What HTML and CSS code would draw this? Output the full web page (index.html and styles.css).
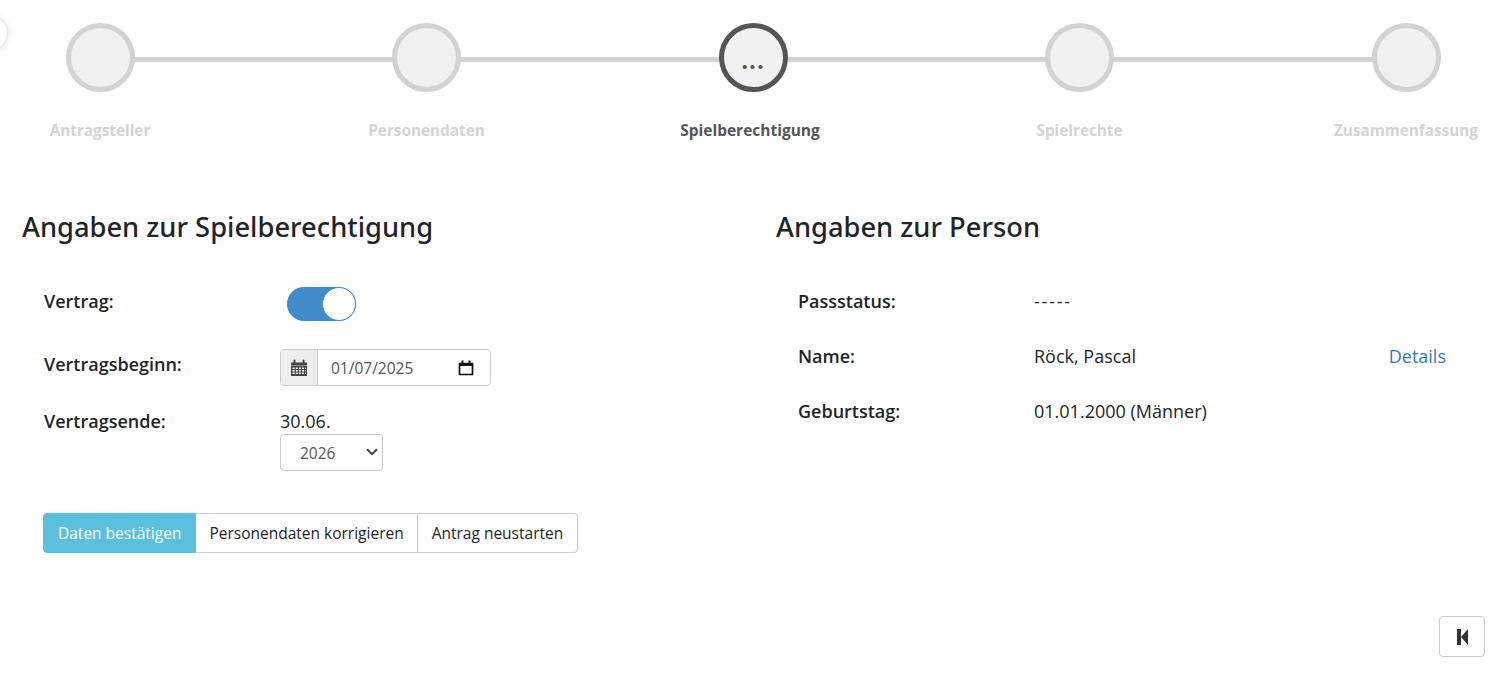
FILE: index.html
```html
<!DOCTYPE html>
<html lang="de">
<head>
<meta charset="utf-8">
<title>Spielberechtigung</title>
<link rel="stylesheet" href="styles.css">
</head>
<body>
<button class="side-toggle" aria-label="Menü"></button>
<ol class="stepper">
  <li class="step"><span class="dot"></span><span class="step-label">Antragsteller</span></li>
  <li class="step"><span class="dot"></span><span class="step-label">Personendaten</span></li>
  <li class="step active"><span class="dot">...</span><span class="step-label">Spielberechtigung</span></li>
  <li class="step"><span class="dot"></span><span class="step-label">Spielrechte</span></li>
  <li class="step"><span class="dot"></span><span class="step-label">Zusammenfassung</span></li>
</ol>
<main class="columns">
  <section class="col">
    <h2 class="title">Angaben zur Spielberechtigung</h2>
    <div class="form-row row-toggle">
      <label class="lbl">Vertrag:</label>
      <span class="switch"><span class="knob"></span></span>
    </div>
    <div class="form-row row-date">
      <label class="lbl">Vertragsbeginn:</label>
      <div class="date-group">
        <span class="addon">
          <svg width="16" height="17" viewBox="0 0 16 17"><path fill="#444" d="M0 3.500h2.500V1.500a1 1 0 0 1 2 0v2h7v-2a1 1 0 0 1 2 0v2H16v3H0z"/><path fill="#444" fill-rule="evenodd" d="M0 7h16v10H0zM1.500 8.500v1.500h2.200V8.500zM4.700 8.500v1.500h2.100V8.500zM7.800 8.500v1.500h2.100V8.500zM10.900 8.500v1.500h2.100V8.500zM14 8.500v1.500h.7V8.500zM1.500 11v1.500h2.200V11zM4.700 11v1.500h2.100V11zM7.800 11v1.500h2.100V11zM10.900 11v1.500h2.100V11zM14 11v1.500h.7V11zM1.500 13.500V15h2.200v-1.500zM4.700 13.500V15h2.100v-1.500zM7.800 13.500V15h2.100v-1.500zM10.900 13.500V15h2.100v-1.500zM14 13.500V15h.7v-1.500z"/></svg>
        </span>
        <span class="date-input">
          <span class="date-text">01/07/2025</span>
          <svg width="16" height="16" viewBox="0 0 16 16"><path fill="none" stroke="#111" stroke-width="1.700" d="M1.500 3.500h13v11h-13z"/><path fill="#111" d="M1 3h14v3H1zM3.500.5h2V3h-2zM10.500.5h2V3h-2z"/></svg>
        </span>
      </div>
    </div>
    <div class="form-row row-end">
      <label class="lbl">Vertragsende:</label>
      <div class="end-value">
        <div class="end-date">30.06.</div>
        <div class="year-wrap">
          <select class="year"><option>2026</option></select>
          <svg class="chev" width="12" height="8" viewBox="0 0 12 8"><path fill="none" stroke="#444" stroke-width="2" d="M1 1.200l5 5 5-5"/></svg>
        </div>
      </div>
    </div>
    <div class="btn-group">
      <button class="btn btn-info">Daten bestätigen</button>
      <button class="btn btn-mid">Personendaten korrigieren</button>
      <button class="btn">Antrag neustarten</button>
    </div>
  </section>
  <section class="col">
    <h2 class="title">Angaben zur Person</h2>
    <dl class="facts">
      <div class="fact"><dt class="lbl">Passstatus:</dt><dd class="val dashes">-----</dd></div>
      <div class="fact"><dt class="lbl">Name:</dt><dd class="val">Röck, Pascal</dd><a class="link" href="#">Details</a></div>
      <div class="fact"><dt class="lbl">Geburtstag:</dt><dd class="val">01.01.2000 (Männer)</dd></div>
    </dl>
  </section>
</main>
<button class="back" aria-label="Zurück">
  <svg width="11" height="16" viewBox="0 0 11 16"><path fill="#333" d="M0 0h4v16H0zM4 8l7-8v16z"/></svg>
</button>
</body>
</html>
```

FILE: styles.css
```css
* { box-sizing: border-box; }
html, body { height: 100%; }
body {
  margin: 0;
  position: relative;
  overflow: hidden;
  background: #fff;
  color: #212529;
  font-family: "Open Sans", "Noto Sans", sans-serif;
  font-size: 18px;
  line-height: 24px;
}
.side-toggle {
  position: absolute;
  left: -28px;
  top: 15px;
  width: 36px;
  height: 36px;
  border: 1px solid #e4e4e4;
  border-radius: 50%;
  background: #fff;
  box-shadow: 0 0 6px rgba(0,0,0,.12);
  padding: 0;
}
.stepper {
  list-style: none;
  margin: 0;
  padding: 23px 29px 0 27px;
  display: flex;
  justify-content: space-between;
  position: relative;
}
.stepper::before {
  content: "";
  position: absolute;
  left: 100px;
  right: 100px;
  top: 57px;
  height: 5px;
  background: #d3d3d3;
}
.step {
  width: 146px;
  display: flex;
  flex-direction: column;
  align-items: center;
  position: relative;
}
.dot {
  width: 69px;
  height: 69px;
  border: 5px solid #d3d3d3;
  border-radius: 50%;
  background: #f1f1f1;
  display: block;
  text-align: center;
  font-weight: 700;
  font-size: 24px;
  line-height: 64px;
  letter-spacing: 1px;
  color: #555;
}
.step-label {
  margin-top: 26px;
  font-size: 15.3px;
  font-weight: 700;
  line-height: 24px;
  color: #d3d3d3;
  white-space: nowrap;
}
.step.active .dot { border-color: #555; }
.step.active .step-label { color: #555; margin-right: 6px; font-size: 15.5px; }
.columns {
  display: grid;
  grid-template-columns: 754px 754px;
  margin-top: 68px;
}
.col { padding-left: 22px; }
.title {
  margin: 0 0 43px;
  font-size: 27.3px;
  font-weight: 500;
  line-height: 34px;
  color: #212529;
  font-family: "Noto Sans", "Open Sans", sans-serif;
}
.lbl { font-weight: 600; }
.form-row { display: flex; padding-left: 22px; }
.form-row .lbl { width: 236px; flex: none; }
.row-toggle { height: 34px; margin-bottom: 28px; }
.row-toggle .lbl { padding-top: 2px; }
.switch {
  display: block;
  margin-left: 7px;
  width: 69px;
  height: 34px;
  border-radius: 17px;
  background: #428bca;
  position: relative;
}
.knob {
  position: absolute;
  right: 0;
  top: 0;
  width: 34px;
  height: 34px;
  border-radius: 50%;
  background: #fff;
  border: 1px solid #428bca;
}
.row-date { height: 37px; margin-bottom: 23px; }
.row-date .lbl { padding-top: 3px; }
.date-group {
  display: flex;
  width: 211px;
  height: 37px;
  border: 1px solid #ccc;
  border-radius: 4px;
  overflow: hidden;
}
.addon {
  width: 37px;
  background: #eee;
  border-right: 1px solid #ccc;
  display: flex;
  align-items: center;
  justify-content: center;
}
.date-input {
  flex: 1;
  display: flex;
  align-items: center;
  justify-content: space-between;
  padding: 0 16px 0 13px;
  color: #555;
  font-size: 15.5px;
}
.end-date { height: 25px; }
.year-wrap { position: relative; width: 103px; }
.year {
  display: block;
  width: 103px;
  height: 37px;
  padding: 1px 12px 0 19px;
  border: 1px solid #ccc;
  border-radius: 4px;
  background: #fff;
  color: #555;
  font-family: inherit;
  font-size: 15.5px;
  appearance: none;
}
.chev {
  position: absolute;
  right: 5px;
  top: 14px;
  pointer-events: none;
}
.row-end { margin-bottom: 42px; }
.btn-group { display: flex; margin-left: 21px; width: max-content; }
.btn {
  height: 40px;
  padding: 0 14px;
  border: 1px solid #ccc;
  border-left-width: 0;
  background: #fff;
  color: #212529;
  font-family: inherit;
  font-size: 15.5px;
}
.btn:first-child { border-radius: 4px 0 0 4px; }
.btn:last-child { border-radius: 0 4px 4px 0; }
.btn-mid { padding: 0 13px; }
.btn-info {
  background: #5bc0de;
  border: 1px solid #5bc0de;
  color: #fff;
}
.facts { margin: 0; padding-left: 22px; padding-top: 2px; }
.fact {
  display: grid;
  grid-template-columns: 236px 1fr auto;
  height: 55px;
  padding-right: 62px;
}
.val { margin: 0; }
.dashes { letter-spacing: 1.8px; }
.link { color: #337ab7; text-decoration: none; }
.back {
  position: absolute;
  left: 1439px;
  top: 616px;
  width: 46px;
  height: 41px;
  border: 1px solid #ccc;
  border-radius: 4px;
  background: #fff;
  display: flex;
  align-items: center;
  justify-content: center;
  padding: 0;
}
```
